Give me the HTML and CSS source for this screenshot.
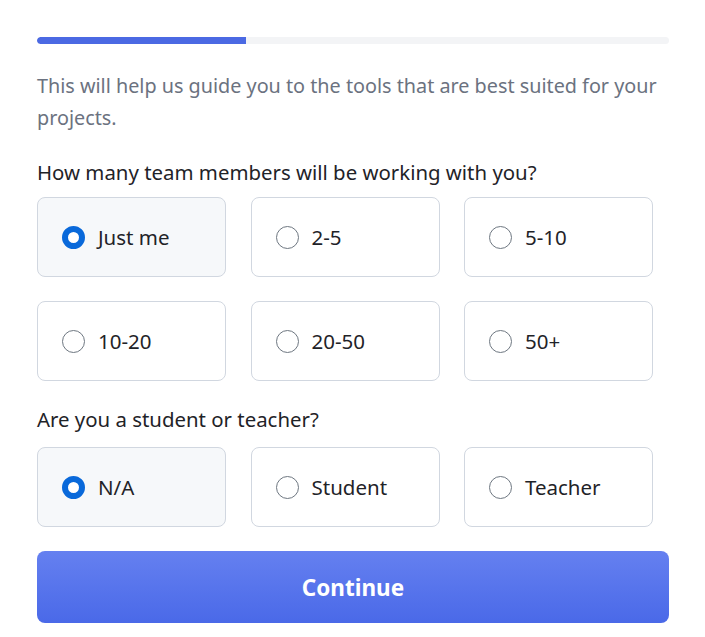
FILE: index.html
```html
<!DOCTYPE html>
<html>
<head>
<meta charset="utf-8">
<link rel="stylesheet" href="styles.css">
</head>
<body>
<div class="page">
  <div class="progress"><div class="progress-fill" style="width:33%"></div></div>
  <p class="intro">This will help us guide you to the tools that are best suited for your projects.</p>

  <div class="question">How many team members will be working with you?</div>
  <div class="options">
    <label class="option selected"><span class="radio"></span><span class="label">Just me</span></label>
    <label class="option"><span class="radio"></span><span class="label">2-5</span></label>
    <label class="option"><span class="radio"></span><span class="label">5-10</span></label>
    <label class="option"><span class="radio"></span><span class="label">10-20</span></label>
    <label class="option"><span class="radio"></span><span class="label">20-50</span></label>
    <label class="option"><span class="radio"></span><span class="label">50+</span></label>
  </div>

  <div class="question q2">Are you a student or teacher?</div>
  <div class="options o2">
    <label class="option selected"><span class="radio"></span><span class="label">N/A</span></label>
    <label class="option"><span class="radio"></span><span class="label">Student</span></label>
    <label class="option"><span class="radio"></span><span class="label">Teacher</span></label>
  </div>

  <button class="continue">Continue</button>
</div>
</body>
</html>
```
FILE: styles.css
```css
* { box-sizing: border-box; }
html, body { margin: 0; padding: 0; background: #fff; }
body { font-family: "Noto Sans", "Open Sans", sans-serif; }

.page {
  padding: 37px 36px 0 37px;
  width: 705px;
}

.progress {
  height: 7px;
  background: #f3f4f6;
  border-radius: 4px;
  overflow: hidden;
}
.progress-fill {
  height: 100%;
  background: #4b69e3;
  border-radius: 4px 0 0 4px;
}

.intro {
  margin: 26px 0 0;
  font-size: 19.8px;
  line-height: 32px;
  color: #6b7280;
}

.question {
  margin-top: 23px;
  font-size: 20.4px;
  line-height: 30px;
  color: #1f2328;
}

.options {
  margin-top: 10px;
  display: grid;
  grid-template-columns: repeat(3, 189px);
  column-gap: 24.5px;
  row-gap: 24px;
}
.options.o2 { margin-top: 13px; }

.option {
  height: 80px;
  border: 1px solid #d1d7e0;
  border-radius: 8px;
  background: #fff;
  display: flex;
  align-items: center;
  padding-left: 24px;
  gap: 13px;
  font-size: 20.5px;
  color: #1f2328;
}
.option.selected {
  background: #f6f8fa;
}

.radio {
  width: 23px;
  height: 23px;
  border-radius: 50%;
  border: 1px solid #6e7781;
  background: #fff;
  flex: none;
}
.option.selected .radio {
  border: 6px solid #0969da;
}

.continue {
  display: block;
  margin-top: 24px;
  width: 632px;
  height: 72px;
  border: none;
  border-radius: 8px;
  background: linear-gradient(#6580f0, #4a69e8);
  color: #fff;
  font-family: inherit;
  font-size: 22.5px;
  font-weight: 700;
}
```
